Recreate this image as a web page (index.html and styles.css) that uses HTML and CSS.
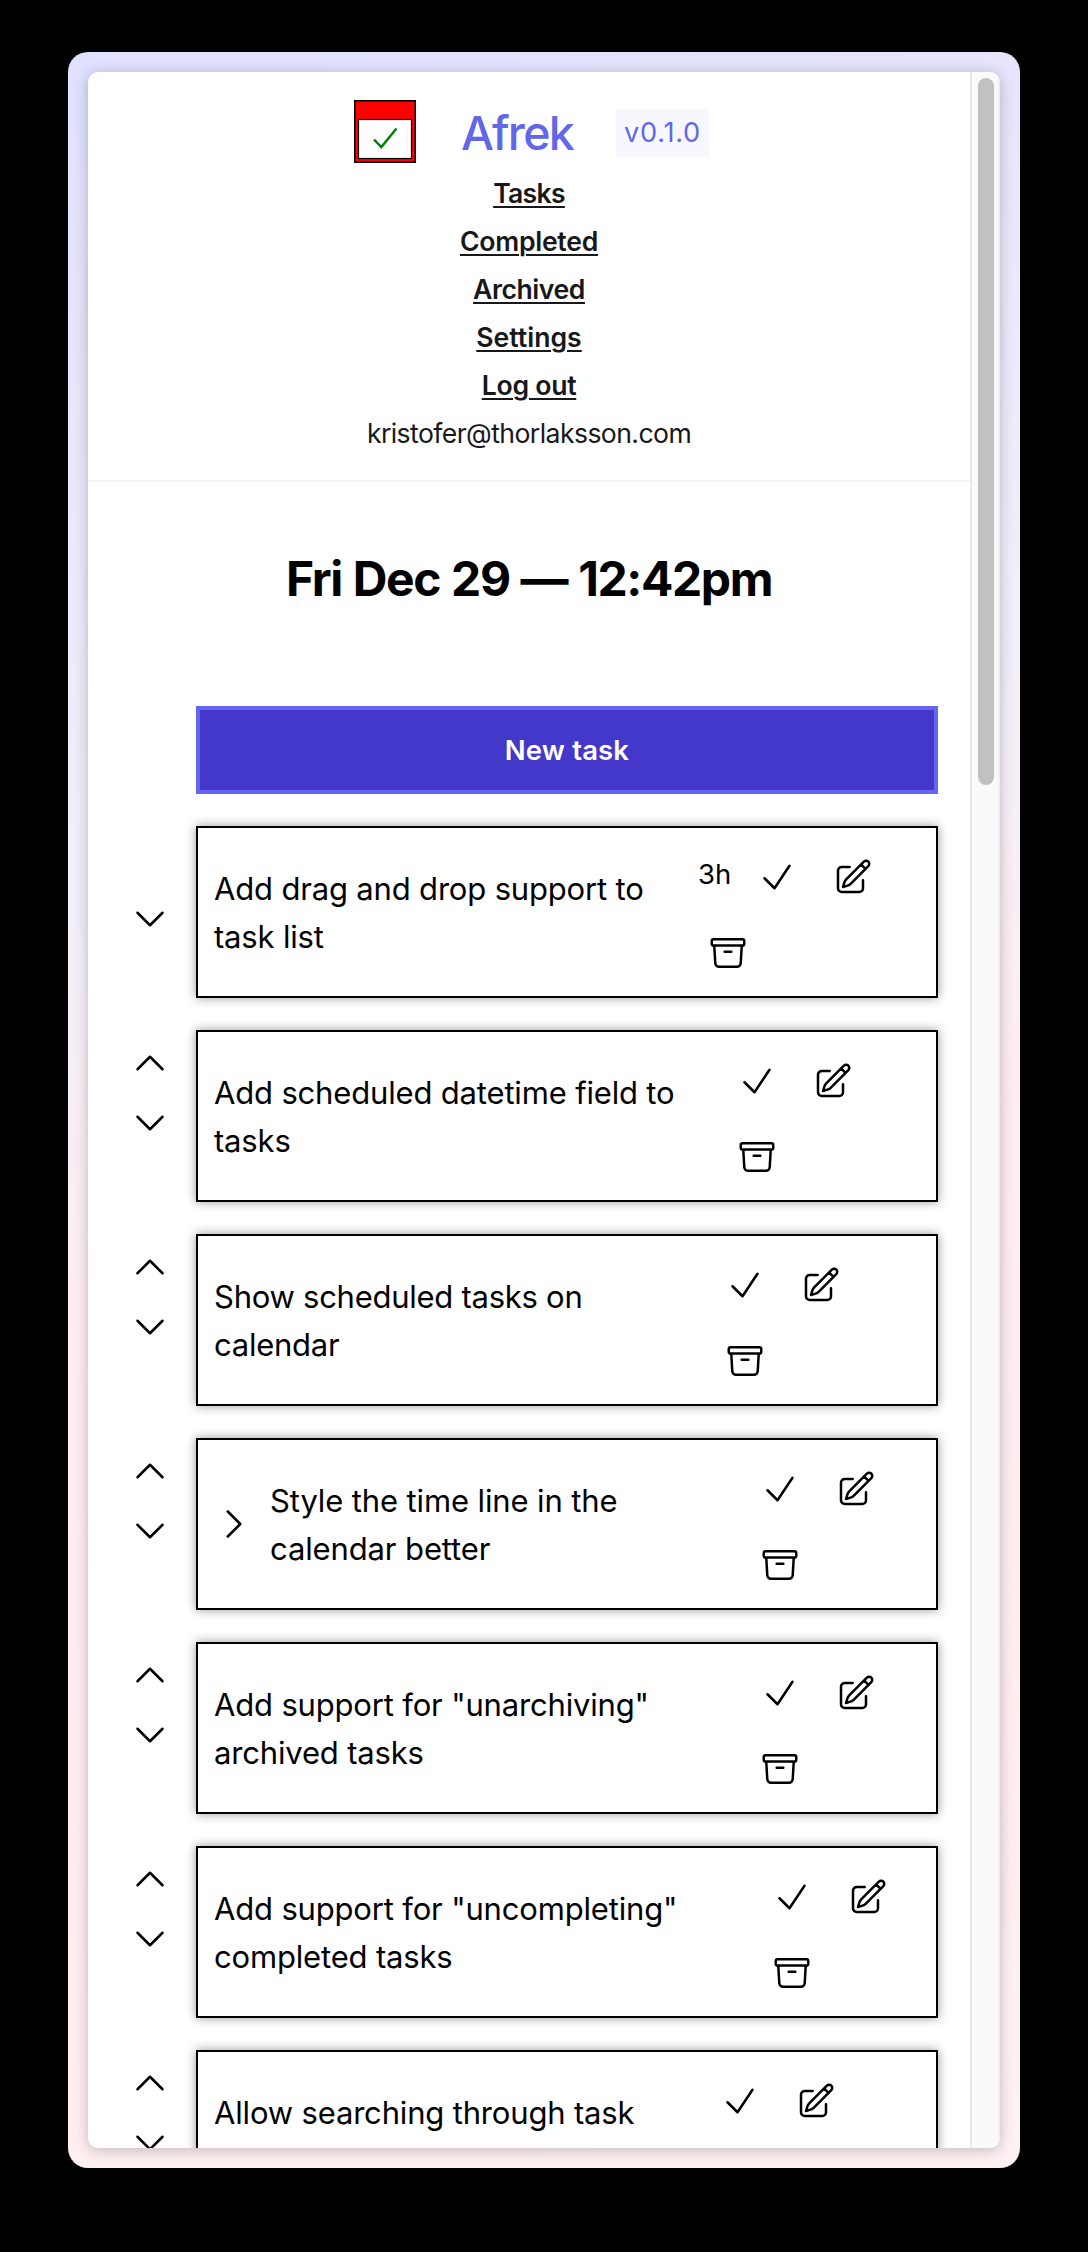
FILE: index.html
```html
<!DOCTYPE html>
<html lang="en">
<head>
<meta charset="utf-8">
<title>Afrek</title>
<link rel="stylesheet" href="styles.css">
</head>
<body>
<svg class="sprite" aria-hidden="true">
  <symbol id="check" viewBox="0 0 24 24"><path d="M4.5 12.75l6 6 9-13.5"/></symbol>
  <symbol id="edit" viewBox="0 0 24 24"><path d="M16.862 4.487l1.687-1.688a1.875 1.875 0 112.652 2.652L10.582 16.07a4.5 4.5 0 01-1.897 1.13L6 18l.8-2.685a4.5 4.5 0 011.13-1.897l8.932-8.931zm0 0L19.5 7.125M18 14v4.75A2.25 2.25 0 0115.75 21H5.25A2.25 2.25 0 013 18.75V8.25A2.25 2.25 0 015.25 6H10"/></symbol>
  <symbol id="archive" viewBox="0 0 24 24"><path d="M20.25 7.5l-.625 10.632a2.25 2.25 0 01-2.247 2.118H6.622a2.25 2.25 0 01-2.247-2.118L3.75 7.5M10 11.25h4M3.375 7.5h17.25c.621 0 1.125-.504 1.125-1.125v-1.5c0-.621-.504-1.125-1.125-1.125H3.375c-.621 0-1.125.504-1.125 1.125v1.5c0 .621.504 1.125 1.125 1.125z"/></symbol>
  <symbol id="up" viewBox="0 0 24 24"><path d="M4.5 15.75l7.5-7.5 7.5 7.5"/></symbol>
  <symbol id="down" viewBox="0 0 24 24"><path d="M19.5 8.25l-7.5 7.5-7.5-7.5"/></symbol>
  <symbol id="right" viewBox="0 0 24 24"><path d="M8.25 4.5l7.5 7.5-7.5 7.5"/></symbol>
</svg>
<div class="frame">
  <div class="window">
    <div class="content">
      <header class="header">
        <div class="brand">
          <svg class="logo" viewBox="0 0 62 63">
            <rect x=".75" y=".75" width="60.5" height="61.5" fill="#f00" stroke="#000" stroke-width="1.5"/>
            <rect x="4.5" y="19.5" width="53" height="39" fill="#fff" stroke="#000" stroke-width="1.2"/>
            <path d="M20 39.5l7.3 7.6L42.5 28.5" fill="none" stroke="#008000" stroke-width="2.4"/>
          </svg>
          <span class="name">Afrek</span>
          <span class="version">v0.1.0</span>
        </div>
        <nav class="nav">
          <a class="link-tasks">Tasks</a>
          <a>Completed</a>
          <a class="link-archived">Archived</a>
          <a class="link-settings">Settings</a>
          <a>Log out</a>
          <span class="email">kristofer@thorlaksson.com</span>
        </nav>
      </header>
      <h1 class="clock">Fri Dec 29 — 12:42pm</h1>
      <main class="tasks">
        <button class="new">New task</button>
        <div class="task">
          <div class="move"><svg class="icon down"><use href="#down"/></svg></div>
          <article class="card">
            <p class="title">Add drag and drop support to<br>task list</p>
            <div class="actions" style="width:230px"><span class="age">3h</span><svg class="icon"><use href="#check"/></svg><svg class="icon"><use href="#edit"/></svg><svg class="icon"><use href="#archive"/></svg></div>
          </article>
        </div>
        <div class="task">
          <div class="move"><svg class="icon"><use href="#up"/></svg><svg class="icon down"><use href="#down"/></svg></div>
          <article class="card">
            <p class="title">Add scheduled datetime field to<br>tasks</p>
            <div class="actions" style="width:201px"><svg class="icon"><use href="#check"/></svg><svg class="icon"><use href="#edit"/></svg><svg class="icon"><use href="#archive"/></svg></div>
          </article>
        </div>
        <div class="task">
          <div class="move"><svg class="icon"><use href="#up"/></svg><svg class="icon down"><use href="#down"/></svg></div>
          <article class="card">
            <p class="title tight">Show scheduled tasks on<br>calendar</p>
            <div class="actions" style="width:213px"><svg class="icon"><use href="#check"/></svg><svg class="icon"><use href="#edit"/></svg><svg class="icon"><use href="#archive"/></svg></div>
          </article>
        </div>
        <div class="task">
          <div class="move"><svg class="icon"><use href="#up"/></svg><svg class="icon down"><use href="#down"/></svg></div>
          <article class="card">
            <svg class="icon expand"><use href="#right"/></svg>
            <p class="title loose">Style the time line in the<br>calendar better</p>
            <div class="actions" style="width:178px"><svg class="icon"><use href="#check"/></svg><svg class="icon"><use href="#edit"/></svg><svg class="icon"><use href="#archive"/></svg></div>
          </article>
        </div>
        <div class="task">
          <div class="move"><svg class="icon"><use href="#up"/></svg><svg class="icon down"><use href="#down"/></svg></div>
          <article class="card">
            <p class="title">Add support for "unarchiving"<br>archived tasks</p>
            <div class="actions" style="width:178px"><svg class="icon"><use href="#check"/></svg><svg class="icon"><use href="#edit"/></svg><svg class="icon"><use href="#archive"/></svg></div>
          </article>
        </div>
        <div class="task">
          <div class="move"><svg class="icon"><use href="#up"/></svg><svg class="icon down"><use href="#down"/></svg></div>
          <article class="card">
            <p class="title">Add support for "uncompleting"<br>completed tasks</p>
            <div class="actions" style="width:166px"><svg class="icon"><use href="#check"/></svg><svg class="icon"><use href="#edit"/></svg><svg class="icon"><use href="#archive"/></svg></div>
          </article>
        </div>
        <div class="task">
          <div class="move"><svg class="icon"><use href="#up"/></svg><svg class="icon down"><use href="#down"/></svg></div>
          <article class="card">
            <p class="title">Allow searching through task</p>
            <div class="actions" style="width:218px"><svg class="icon"><use href="#check"/></svg><svg class="icon"><use href="#edit"/></svg></div>
          </article>
        </div>
      </main>
    </div>
    <div class="scrollbar"><div class="thumb"></div></div>
  </div>
</div>
</body>
</html>
```
FILE: styles.css
```css
* { box-sizing: border-box; }
body {
  margin: 0;
  height: 2252px;
  padding: 52px 68px 84px;
  overflow: hidden;
  background: #000;
  font-family: Inter, "Liberation Sans", sans-serif;
  color: #000;
}
.sprite { display: none; }
.frame {
  height: 2116px;
  padding: 20px;
  border-radius: 20px;
  background: linear-gradient(165deg, #dfe1fe 0%, #e7e5fc 12%, #f1effa 34%, #fdedf3 52%, #ffecef 75%, #fef1f1 100%);
}
.window {
  display: flex;
  height: 2076px;
  overflow: hidden;
  border-radius: 10px;
  background: #fff;
  box-shadow: 0 2px 14px rgba(0, 0, 0, .24);
}
.content { flex: none; width: 882px; height: 2076px; overflow: hidden; }
.scrollbar {
  flex: 1;
  padding: 6px 0 0 6px;
  border-left: 2px solid #e8e8e8;
  border-right: 2px solid #f0f0f0;
  background: #fafafa;
}
.thumb { width: 16px; height: 707px; border-radius: 8px; background: #c1c1c1; }

.header {
  height: 410px;
  padding-top: 24px;
  border-bottom: 2px solid #f4f4f5;
  color: #18181b;
}
.brand { display: flex; align-items: center; height: 73px; padding-left: 266px; }
.logo { width: 62px; height: 63px; margin-top: -2px; }
.name {
  width: 114px;
  margin: 1px 40px 0 45px;
  color: #6366e9;
  font-size: 46.5px;
  font-weight: 500;
  line-height: 72px;
  letter-spacing: -1.8px;
  white-space: nowrap;
}
.version {
  width: 93px;
  margin-left: 1px;
  background: #f7f8fe;
  color: #6366e9;
  font-size: 27.2px;
  line-height: 48px;
  letter-spacing: .7px;
  text-align: center;
}
.nav {
  display: flex;
  flex-direction: column;
  align-items: center;
  font-size: 26.6px;
  line-height: 48px;
}
.nav a {
  font-weight: 600;
  letter-spacing: -.27px;
  text-decoration: underline;
  text-decoration-thickness: 2px;
  text-underline-offset: 3px;
}
.nav .link-tasks { letter-spacing: -.7px; }
.nav .link-archived { letter-spacing: -.45px; }
.nav .link-settings { letter-spacing: 0; }
.email { letter-spacing: -.58px; }

.clock {
  margin: 69px 0 99px;
  font-size: 48px;
  font-weight: 700;
  line-height: 56px;
  letter-spacing: -1.4px;
  word-spacing: 1px;
  text-align: center;
}

.tasks { padding: 0 32px 0 42px; }
.new {
  display: block;
  width: 742px;
  height: 88px;
  margin-left: 66px;
  padding: 0;
  border: 4px solid #6366f1;
  background: #4338ca;
  color: #fff;
  font: 600 27.5px/48px Inter, "Liberation Sans", sans-serif;
  letter-spacing: .15px;
}
.task { display: flex; gap: 26px; margin-top: 32px; }
.move {
  display: flex;
  flex-direction: column;
  justify-content: flex-end;
  gap: 20px;
  width: 40px;
  height: 113px;
}
.icon {
  display: block;
  flex: none;
  width: 40px;
  height: 40px;
  fill: none;
  stroke: #000;
  stroke-width: 1.5;
  stroke-linecap: round;
  stroke-linejoin: round;
}
.card {
  display: flex;
  flex: none;
  width: 742px;
  height: 172px;
  padding: 11px 16px 0;
  border: 2px solid #000;
  background: #fff;
  box-shadow: 0 0 10px rgba(0, 0, 0, .4);
}
.expand { margin: 53px 16px 0 0; }
.title {
  flex: 1;
  margin: 26px 0 0;
  font-size: 31px;
  line-height: 48px;
  letter-spacing: -.17px;
  white-space: nowrap;
}
.title.tight { letter-spacing: -.26px; }
.title.loose { letter-spacing: -.12px; }
.actions { display: flex; flex: none; flex-wrap: wrap; align-content: flex-start; }
.actions .icon { margin: 18px; }
.age {
  width: 49px;
  height: 48px;
  margin-top: 11px;
  padding-left: 8px;
  font-size: 27.5px;
  line-height: 48px;
}
```
